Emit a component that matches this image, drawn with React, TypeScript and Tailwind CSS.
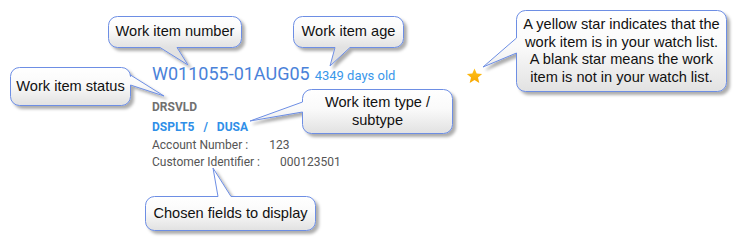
import type { ReactNode } from 'react';

type Side = 'top' | 'bottom' | 'left' | 'right';

type CalloutType = {
  id: string;
  x: number;
  y: number;
  w: number;
  h: number;
  side: Side;
  a: number; // tail base start (x for top/bottom, y for left/right)
  b: number; // tail base end
  tip: [number, number];
  text: ReactNode;
};

const callouts: CalloutType[] = [
  { id: 'num', x: 108, y: 16, w: 133, h: 31, side: 'bottom', a: 160, b: 177, tip: [188, 65], text: 'Work item number' },
  { id: 'age', x: 293, y: 16, w: 110, h: 31, side: 'bottom', a: 335, b: 350, tip: [330, 66], text: 'Work item age' },
  { id: 'status', x: 10, y: 67, w: 120, h: 38, side: 'right', a: 75, b: 85, tip: [164, 96], text: 'Work item status' },
  {
    id: 'type',
    x: 302,
    y: 89,
    w: 150,
    h: 44,
    side: 'left',
    a: 102,
    b: 112,
    tip: [250, 121],
    text: (
      <>
        Work item type /<br />
        subtype
      </>
    ),
  },
  { id: 'fields', x: 145, y: 196, w: 170, h: 34, side: 'top', a: 218, b: 231, tip: [213, 168], text: 'Chosen fields to display' },
  {
    id: 'star',
    x: 516,
    y: 10,
    w: 210,
    h: 81,
    side: 'left',
    a: 38,
    b: 53,
    tip: [483, 67],
    text: (
      <>
        A yellow star indicates that the
        <br />
        work item is in your watch list.
        <br />
        A blank star means the work
        <br />
        item is not in your watch list.
      </>
    ),
  },
];

// rounded box with the tail cut into one side
const balloonPath = (c: CalloutType) => {
  const r = 9;
  const x = c.x + 0.5;
  const y = c.y + 0.5;
  const R = x + c.w;
  const B = y + c.h;
  const [tx, ty] = c.tip;
  let d = `M${x + r},${y}`;
  if (c.side === 'top') d += ` H${c.a} L${tx},${ty} L${c.b},${y}`;
  d += ` H${R - r} A${r},${r} 0 0 1 ${R},${y + r}`;
  if (c.side === 'right') d += ` V${c.a} L${tx},${ty} L${R},${c.b}`;
  d += ` V${B - r} A${r},${r} 0 0 1 ${R - r},${B}`;
  if (c.side === 'bottom') d += ` H${c.b} L${tx},${ty} L${c.a},${B}`;
  d += ` H${x + r} A${r},${r} 0 0 1 ${x},${B - r}`;
  if (c.side === 'left') d += ` V${c.b} L${tx},${ty} L${x},${c.a}`;
  d += ` V${y + r} A${r},${r} 0 0 1 ${x + r},${y} Z`;
  return d;
};

const Star = () => (
  <svg width="17" height="16" viewBox="0 0 24 23" className="mt-[1px]">
    <defs>
      <linearGradient id="starFill" x1="0" y1="0" x2="0" y2="1">
        <stop offset="0" stopColor="#ffc21a" />
        <stop offset="1" stopColor="#f7a600" />
      </linearGradient>
    </defs>
    <path
      d="M12 0.8 L15.1 8 L23 8.6 L17 13.8 L18.9 21.6 L12 17.4 L5.1 21.6 L7 13.8 L1 8.6 L8.9 8 Z"
      fill="url(#starFill)"
    />
  </svg>
);

const WorkItemCard = () => (
  <div className="pl-[152px] pt-[62px] font-['Roboto',sans-serif]">
    <div className="flex w-[331px] items-center justify-between">
      <div className="flex items-baseline leading-[24px]">
        <span className="text-[18px] text-[#4a82d9]">W011055-01AUG05</span>
        <span className="ml-[5px] text-[13px] text-[#3a97ea]">4349 days old</span>
      </div>
      <Star />
    </div>

    <div className="mt-[11px] text-[12px] font-bold leading-[17px] text-[#707070]">DRSVLD</div>

    <div className="mt-[3px] flex text-[12px] font-bold leading-[17px] text-[#2f8fe8]">
      <span>DSPLT5</span>
      <span className="ml-[9px]">/</span>
      <span className="ml-[9px]">DUSA</span>
    </div>

    <div className="mt-[1px] flex flex-col text-[12px] leading-[17px] text-[#555555]">
      <div className="flex">
        <span>Account Number :</span>
        <span className="ml-[21px]">123</span>
      </div>
      <div className="flex">
        <span>Customer Identifier :</span>
        <span className="ml-[20px]">000123501</span>
      </div>
    </div>
  </div>
);

export default function App() {
  return (
    <div className="relative h-[243px] w-[739px] overflow-hidden bg-white">
      <WorkItemCard />

      {/* annotation balloons laid over the card */}
      <svg width="739" height="243" className="pointer-events-none absolute left-0 top-0">
        <defs>
          <filter id="balloonShadow" x="-10%" y="-10%" width="130%" height="140%">
            <feDropShadow dx="3" dy="3" stdDeviation="1.4" floodColor="#000" floodOpacity="0.32" />
          </filter>
          {callouts.map((c) => (
            <linearGradient
              key={c.id}
              id={`fill-${c.id}`}
              gradientUnits="userSpaceOnUse"
              x1="0"
              y1={c.y}
              x2="0"
              y2={c.y + c.h}
            >
              <stop offset="0" stopColor="#ffffff" />
              <stop offset="0.45" stopColor="#fafafa" />
              <stop offset="1" stopColor="#e2e2e2" />
            </linearGradient>
          ))}
        </defs>
        {callouts.map((c) => (
          <path
            key={c.id}
            d={balloonPath(c)}
            fill={`url(#fill-${c.id})`}
            stroke="#6d8ee4"
            strokeWidth="1"
            strokeLinejoin="round"
            filter="url(#balloonShadow)"
          />
        ))}
      </svg>

      {callouts.map((c) => (
        <div
          key={c.id}
          className="absolute flex items-center justify-center text-center font-['Liberation_Sans',Arial,sans-serif] text-[14.6px] leading-[17.5px] text-[#111111]"
          style={{ left: c.x, top: c.y, width: c.w + 1, height: c.h + 1 }}
        >
          <div>{c.text}</div>
        </div>
      ))}
    </div>
  );
}
